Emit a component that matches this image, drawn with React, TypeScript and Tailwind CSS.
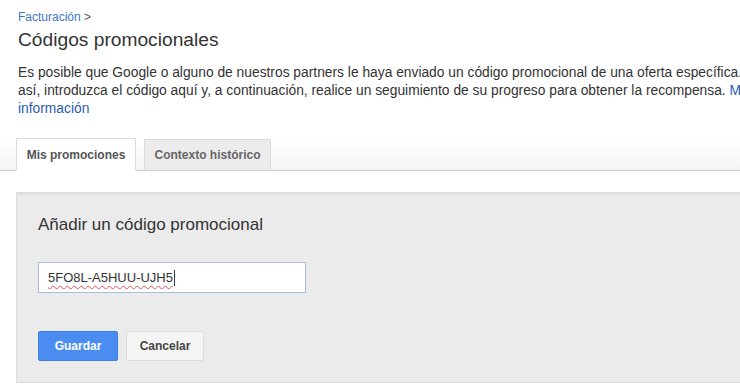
export default function App() {
  return (
    <div className="w-[740px] h-[389px] overflow-hidden bg-white text-[#333] font-['Liberation_Sans',Arial,sans-serif]">
      <div className="px-[18px] pt-[10px]">
        <div className="text-[12px] leading-[14px] text-[#3a76c4]">
          Facturación <span className="text-[#555]">&gt;</span>
        </div>
        <h1 className="mt-[4px] text-[19.2px] leading-[24px] text-[#333]">Códigos promocionales</h1>
        <p className="mt-[12px] w-[775px] text-[13.8px] leading-[18px] text-[#333]">
          Es posible que Google o alguno de nuestros partners le haya enviado un código promocional de una oferta
          específica. Si es así, introduzca el código aquí y, a continuación, realice un seguimiento de su progreso
          para obtener la recompensa. <span className="text-[#2a5db0]">Más información</span>
        </p>
      </div>

      {/* Tabs */}
      <div className="mt-[20px] h-[33px] flex items-end gap-[8px] px-[16px] border-b border-[#cfcfcf] bg-gradient-to-b from-white to-[#f4f4f4]">
        <div className="h-[33px] w-[120px] -mb-px flex items-center justify-center bg-white border border-[#dcdcdc] border-b-white text-[12px] font-bold text-[#555]">
          Mis promociones
        </div>
        <div className="h-[31px] w-[127px] flex items-center justify-center bg-[#ececec] border border-[#dcdcdc] border-b-0 text-[12px] font-bold text-[#666]">
          Contexto histórico
        </div>
      </div>

      {/* Panel */}
      <div className="mt-[21px] ml-[16px] w-[760px] h-[191px] bg-[#ebebeb] border border-[#dedede] shadow-[inset_0_2px_2px_rgba(0,0,0,0.05)] px-[21px] pt-[21px]">
        <h2 className="text-[17px] leading-[22px] text-[#333]">Añadir un código promocional</h2>
        <div className="mt-[26px] w-[268px] h-[31px] bg-white border border-[#a9bfdf] flex items-center px-[9px] text-[13px] text-[#333]">
          <span className="underline decoration-wavy decoration-[#e05050] decoration-1 underline-offset-[3px]">5FO8L-A5HUU-UJH5</span>
          <span className="ml-px w-px h-[16px] bg-[#333]" />
        </div>
        <div className="mt-[38px] flex gap-[8px]">
          <button className="w-[80px] h-[30px] rounded-[2px] bg-[#4a8cf0] border border-[#3f80e4] text-white text-[12px] font-bold">
            Guardar
          </button>
          <button className="w-[78px] h-[30px] rounded-[2px] bg-[#f4f4f4] border border-[#dcdcdc] text-[#444] text-[12px] font-bold">
            Cancelar
          </button>
        </div>
      </div>
    </div>
  );
}
